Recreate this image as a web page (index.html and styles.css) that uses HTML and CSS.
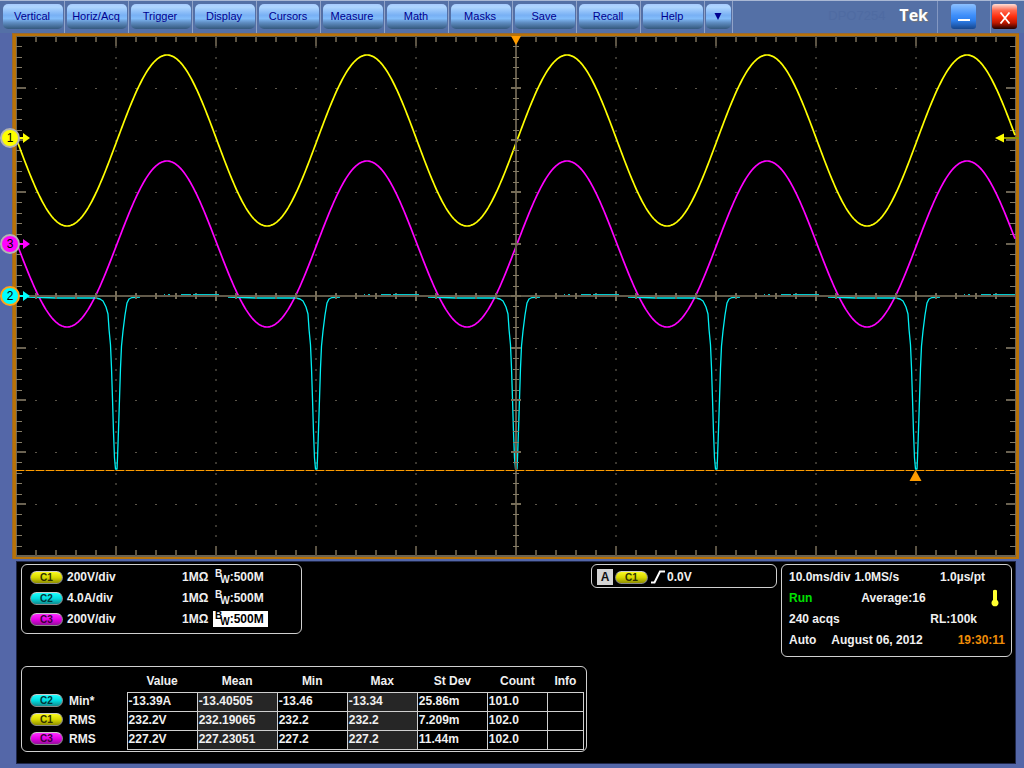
FILE: index.html
```html
<!DOCTYPE html>
<html lang="en">
<head>
<meta charset="utf-8">
<title>Tek Oscilloscope</title>
<link rel="stylesheet" href="styles.css">
</head>
<body>
<header class="toolbar">
  <nav class="menu" aria-label="Main menu">
    <div class="menu-cell"><button class="menu-btn">Vertical</button></div>
    <div class="menu-cell"><button class="menu-btn">Horiz/Acq</button></div>
    <div class="menu-cell"><button class="menu-btn">Trigger</button></div>
    <div class="menu-cell"><button class="menu-btn">Display</button></div>
    <div class="menu-cell"><button class="menu-btn">Cursors</button></div>
    <div class="menu-cell"><button class="menu-btn">Measure</button></div>
    <div class="menu-cell"><button class="menu-btn">Math</button></div>
    <div class="menu-cell"><button class="menu-btn">Masks</button></div>
    <div class="menu-cell"><button class="menu-btn">Save</button></div>
    <div class="menu-cell"><button class="menu-btn">Recall</button></div>
    <div class="menu-cell"><button class="menu-btn">Help</button></div>
    <div class="menu-cell menu-cell-more"><button class="menu-btn" aria-label="More">
      <svg width="8" height="8" viewBox="0 0 8 8"><path d="M0.500 1h7L4 8z" fill="#000090"/></svg>
    </button></div>
  </nav>
  <div class="model">DPO7254</div>
  <div class="brand">Tek</div>
  <div class="window-cell window-cell-min"><button class="win-btn win-min" aria-label="Minimize">
    <svg width="14" height="14" viewBox="0 0 14 14"><path d="M1 9h12v2H1z" fill="#fff"/></svg>
  </button></div>
  <div class="window-cell"><button class="win-btn win-close" aria-label="Close">
    <svg width="12" height="12" viewBox="0 0 12 12"><path d="M1.500 0.500L10.500 11.500M10.500 0.500L1.500 11.500" stroke="#fff" stroke-width="1.800"/></svg>
  </button></div>
</header>

<main>
  <svg class="scope" viewBox="0 33 1024 528" role="img" aria-label="Waveform display">
    <rect x="12" y="33" width="1007" height="526" fill="#b87208"/>
    <path d="M12.500 559V33.500H1019" fill="none" stroke="#9a6a30"/>
    <rect x="16" y="36" width="1000" height="521" fill="#6b6352"/>
    <rect x="17" y="37" width="998" height="518" fill="#000"/>
    <g shape-rendering="crispEdges">
      <path id="dots-x" stroke="#5c564a" fill="none"/>
      <path id="dots-y" stroke="#3a3730" stroke-width="2" fill="none"/>
      <path id="ticks-x" stroke="#5c5444" stroke-width="2" fill="none"/>
      <path id="ticks-y" stroke="#857c66" stroke-width="1" fill="none"/>
      <path id="ticks-major" stroke="#6b6352" stroke-width="2" fill="none"/>
    </g>
    <path id="ch1" class="trace" stroke="#ffff00"/>
    <path id="ch3" class="trace" stroke="#ff00ff"/>
    <path id="ch2" class="trace trace-current" stroke="#00f0f4"/>
    <g shape-rendering="crispEdges" fill="none">
      <path d="M17 296H1015M516 37V556" stroke="#625a4a" stroke-width="2"/>
      <path id="axis-x" stroke="#766d58" stroke-width="2"/>
      <path id="axis-y" stroke="#857c66" stroke-width="1"/>
      <path id="axis-major" stroke="#766d58" stroke-width="2"/>
      <path id="ch2-high" stroke="#00c8d0"/>
      <path d="M16 470.500H1016" stroke="#6a4400"/>
      <path d="M16 470.500H1016" stroke="#ff9c00" stroke-dasharray="8 2"/>
    </g>
    <path d="M511 36h10l-5 9z" fill="#ff9c00"/>
    <path d="M915.500 470l6 11h-12z" fill="#ff9c00"/>
    <path d="M1003 138H1019" stroke="#909000" stroke-width="2"/>
    <path d="M1004 133.500v9l-9-4.500z" fill="#ffff00"/>
    <g class="marker" fill="#ffff00" stroke="#ffff00">
      <path d="M19 138h5" stroke-width="2"/><path d="M23 133v10l7-5z" stroke="none"/>
      <circle cx="10" cy="138" r="9" stroke="#b4b4b4" stroke-width="2"/><text x="10" y="142">1</text>
    </g>
    <g class="marker" fill="#ff00ff" stroke="#ff00ff">
      <path d="M19 244h5" stroke-width="2"/><path d="M23 239v10l7-5z" stroke="none"/>
      <circle cx="10" cy="244" r="9" stroke="#b4b4b4" stroke-width="2"/><text x="10" y="248">3</text>
    </g>
    <g class="marker" fill="#00ffff" stroke="#00ffff">
      <path d="M19 296h5" stroke-width="2"/><path d="M23 291v10l7-5z" stroke="none"/>
      <circle cx="10" cy="296" r="9" stroke="#ffa418" stroke-width="2"/><text x="10" y="300">2</text>
    </g>
  </svg>

  <div class="readouts">
    <div class="left-column">
      <section class="panel channels" aria-label="Channels">
        <div class="channel"><span class="pill pill-c1">C1</span><span>200V/div</span><span>1MΩ</span><span class="bandwidth"><span class="bw-b">B</span><span class="bw-w">W</span>:500M</span></div>
        <div class="channel"><span class="pill pill-c2">C2</span><span>4.0A/div</span><span>1MΩ</span><span class="bandwidth"><span class="bw-b">B</span><span class="bw-w">W</span>:500M</span></div>
        <div class="channel"><span class="pill pill-c3">C3</span><span>200V/div</span><span>1MΩ</span><span class="bandwidth bandwidth-selected"><span class="bw-b">B</span><span class="bw-w">W</span>:500M</span></div>
      </section>
      <section class="panel measurements" aria-label="Measurements">
        <table>
          <colgroup><col class="col-name"><col class="col-std"><col class="col-mean"><col class="col-std"><col class="col-std"><col class="col-std"><col class="col-count"><col class="col-info"></colgroup>
          <thead>
            <tr><td></td><th>Value</th><th>Mean</th><th>Min</th><th>Max</th><th>St Dev</th><th>Count</th><th>Info</th></tr>
          </thead>
          <tbody>
            <tr><th scope="row"><span class="pill pill-c2">C2</span>Min*</th><td>-13.39A</td><td class="shade">-13.40505</td><td>-13.46</td><td class="shade">-13.34</td><td>25.86m</td><td>101.0</td><td></td></tr>
            <tr><th scope="row"><span class="pill pill-c1">C1</span>RMS</th><td>232.2V</td><td class="shade">232.19065</td><td>232.2</td><td class="shade">232.2</td><td>7.209m</td><td>102.0</td><td></td></tr>
            <tr><th scope="row"><span class="pill pill-c3">C3</span>RMS</th><td>227.2V</td><td class="shade">227.23051</td><td>227.2</td><td class="shade">227.2</td><td>11.44m</td><td>102.0</td><td></td></tr>
          </tbody>
        </table>
      </section>
    </div>

    <section class="panel trigger" aria-label="Trigger">
      <span class="trigger-source">A</span>
      <span class="pill pill-c1">C1</span>
      <svg class="slope" width="14" height="14" viewBox="0 0 14 14"><path d="M0 12.500h3.500L9 1.500h5" fill="none" stroke="#fff" stroke-width="2"/></svg>
      <span>0.0V</span>
    </section>

    <section class="panel timebase" aria-label="Timebase">
      <div class="time-row row-rate"><span>10.0ms/div</span><span>1.0MS/s</span><span class="push">1.0µs/pt</span></div>
      <div class="time-row row-state"><span class="run">Run</span><span>Average:16</span>
        <svg class="push" width="8" height="18" viewBox="0 0 8 18"><path d="M2 1.500Q4 0 6 1.500V11A3.500 3.500 0 1 1 2 11z" fill="#ffff30"/></svg></div>
      <div class="time-row row-length"><span>240 acqs</span><span class="push">RL:100k</span></div>
      <div class="time-row row-clock"><span>Auto</span><span>August 06, 2012</span><span class="clock push">19:30:11</span></div>
    </section>
  </div>
</main>
<script src="plot.js"></script>
</body>
</html>
```

FILE: styles.css
```css
* {
  box-sizing: border-box;
}

body {
  margin: 0;
  min-height: 100vh;
  background: #5467a8;
  color: #f0f0f0;
  font: bold 12px/16px "Liberation Sans", Arial, sans-serif;
}

button {
  padding: 0;
  border: 0;
  font: inherit;
  cursor: pointer;
}

.toolbar {
  display: flex;
  align-items: stretch;
  height: 33px;
  border-top: 1px solid #aab8d4;
  background: #5470a6;
}

.menu {
  display: flex;
}

.menu-cell {
  width: 64px;
  padding: 3px 1px 4px 2px;
  border-right: 1px solid #91a3c8;
}

.menu-cell:first-child {
  width: 65px;
  padding-left: 3px;
}

.menu-cell-more {
  width: 28px;
  padding-left: 1px;
}

.menu-btn {
  display: flex;
  align-items: center;
  justify-content: center;
  width: 100%;
  height: 25px;
  padding: 0 2px 2px 0;
  border-radius: 5px;
  background: linear-gradient(#a8ccff 0%, #b0d6ff 12%, #78b0f4 45%, #82bcfa 58%, #5e8cc0 75%, #34587c 100%);
  color: #000090;
  font-size: 11px;
  font-weight: normal;
}

.model {
  margin-left: auto;
  color: #4f6ba2;
  font-size: 13px;
  font-weight: normal;
  line-height: 30px;
}

.brand {
  margin: 0 9px 0 14px;
  color: #fff;
  font-family: "Open Sans", sans-serif;
  font-size: 16px;
  line-height: 28px;
  text-shadow: 1px 1px 1px #777;
}

.window-cell {
  padding: 3px 7px 0 1px;
  border-left: 1px solid #8498c2;
}

.window-cell-min {
  padding: 3px 14px 0 13px;
}

.win-btn {
  display: flex;
  align-items: center;
  justify-content: center;
  width: 25px;
  height: 25px;
  border-radius: 3px;
}

.win-min {
  background: linear-gradient(#8cc0ff 0%, #3f8ffa 45%, #2f80ee 65%, #17468c 100%);
}

.win-close {
  padding-top: 2px;
  background: linear-gradient(#ffe0d8 0%, #ff6a50 25%, #ff3010 50%, #c01800 75%, #200000 100%);
}

.scope {
  display: block;
  width: 100%;
}

.trace {
  fill: none;
  stroke-width: 1.7;
  stroke-linejoin: round;
}

.trace-current {
  stroke-width: 1.3;
}

.marker text {
  fill: #000;
  stroke: none;
  font-size: 12px;
  font-weight: normal;
  text-anchor: middle;
}

.readouts {
  display: grid;
  grid-template-columns: 566fr 186fr 231fr;
  gap: 4px;
  align-items: start;
  margin: 0 8px 4px 16px;
  padding: 2px 3px 11px 4px;
  border: 1px solid #20284a;
  background: #000;
}

.panel {
  border: 1px solid #d0d0d0;
  border-radius: 6px;
}

.left-column {
  display: flex;
  flex-direction: column;
  gap: 32px;
}

.channels {
  width: 281px;
  padding: 1px 0 4px 8px;
}

.channel {
  display: grid;
  grid-template-columns: 32px 110px 26px auto;
  column-gap: 5px;
  align-items: center;
  justify-content: start;
  height: 21px;
}

.pill {
  display: inline-block;
  width: 33px;
  height: 13px;
  border: 1px solid #888;
  border-top-color: #ccc;
  border-radius: 7px;
  font-size: 10px;
  line-height: 12px;
  text-align: center;
}

.channel .pill {
  margin-top: 2px;
}

.pill-c1 {
  background: linear-gradient(#fbfb20, #d8d800 50%, #909000);
  color: #303000;
}

.pill-c2 {
  background: linear-gradient(#20ffff, #00dce0 50%, #108c90);
  color: #003438;
}

.pill-c3 {
  background: linear-gradient(#ff30ff, #e600e6 50%, #96109c);
  color: #380038;
}

.bandwidth {
  display: flex;
  height: 16px;
  padding: 0 4px 0 2px;
}

.bandwidth-selected {
  background: #fff;
  color: #000;
}

.bw-b,
.bw-w {
  font-size: 10px;
}

.bw-b {
  line-height: 10px;
}

.bw-w {
  margin-left: -2px;
  line-height: 22px;
}

.measurements {
  padding: 6px 2px 1px 0;
}

table {
  width: 100%;
  border-collapse: collapse;
  table-layout: fixed;
}

.col-name {
  width: 105px;
}

.col-std {
  width: 70px;
}

.col-mean {
  width: 80px;
}

.col-count {
  width: 60px;
}

.col-info {
  width: 36px;
}

thead th,
thead td {
  height: 19px;
  padding: 0 0 2px;
}

tbody th {
  height: 19px;
  padding: 0 0 2px 8px;
  text-align: left;
}

tbody th .pill {
  margin-right: 6px;
  vertical-align: 1px;
}

tbody td {
  height: 19px;
  padding: 0 0 2px 1px;
  border: 1px solid #d0d0d0;
}

.shade {
  background: #262626;
}

.trigger {
  display: flex;
  align-items: center;
  height: 24px;
  padding: 2px 5px 0 5px;
}

.trigger-source {
  width: 16px;
  margin-right: 2px;
  background: #d4d4d4;
  color: #101010;
  text-align: center;
}

.slope {
  margin: 0 2px 0 3px;
}

.timebase {
  padding: 1px 6px 6px 7px;
}

.time-row {
  display: flex;
  align-items: center;
  height: 21px;
}

.push {
  margin-left: auto;
}

.row-rate {
  gap: 4px;
  padding-right: 20px;
}

.row-state {
  gap: 49px;
  padding-right: 6px;
}

.row-length {
  padding-right: 28px;
}

.row-clock {
  gap: 15px;
}

.run {
  color: #00e000;
}

.clock {
  color: #ee8c08;
}
```

FILE: plot.js
```js
const LEFT = 16, TOP = 36, CENTER_X = 516, CENTER_Y = 296, RIGHT = 1016, BOTTOM = 556;
const DIV_X = 100, DIV_Y = 52;

function draw(id, d) {
  document.getElementById(id).setAttribute('d', d);
}

// Graticule dots, edge ticks and axis ticks
let dotsX = '', dotsY = '', ticksX = '', ticksY = '', major = '';
let axisX = '', axisY = '', axisMajor = '';

for (let i = 1; i < 50; i++) {
  const x = LEFT + i * DIV_X / 5;
  const isMajor = i % 5 === 0;
  const len = isMajor ? 10 : 6;
  ticksX += `M${x} ${TOP}v${len}M${x} ${BOTTOM}v${-len}`;
  if (isMajor) axisMajor += `M${x} ${CENTER_Y - 5}v10`;
  else axisX += `M${x} ${CENTER_Y - 3}v6`;
  for (let j = 1; j < 10; j++) {
    dotsX += `M${x - 1} ${TOP + j * DIV_Y + 0.5}h2`;
  }
}

for (let i = 1; i < 50; i++) {
  const y = Math.round(TOP + i * DIV_Y / 5);
  const isMajor = i % 5 === 0;
  if (isMajor) {
    major += `M${LEFT} ${y}h10M${RIGHT} ${y}h-10`;
    axisMajor += `M${CENTER_X - 5} ${y}h10`;
  } else {
    ticksY += `M${LEFT} ${y + 0.5}h6M${RIGHT} ${y + 0.5}h-6`;
    axisY += `M${CENTER_X - 3} ${y + 0.5}h6`;
  }
  for (let k = 1; k < 10; k++) {
    dotsY += `M${LEFT + k * DIV_X} ${y}v2`;
  }
}

draw('dots-x', dotsX);
draw('dots-y', dotsY);
draw('ticks-x', ticksX);
draw('ticks-y', ticksY);
draw('ticks-major', major);
draw('axis-x', axisX);
draw('axis-y', axisY);
draw('axis-major', axisMajor);

// Voltage traces
function sine(mid, amplitude, start) {
  let d = '';
  for (let x = start; x <= 1015; x++) {
    const y = mid - amplitude * Math.sin((x - 117) * Math.PI / 100);
    d += (d ? 'L' : 'M') + x + ' ' + y.toFixed(1);
  }
  return d;
}

draw('ch1', sine(140.5, 85.5, 18));
draw('ch3', sine(244, 83, 18));

// Current pulses, as offsets from the centre of each pulse
const pulse = [
  [-88, 297], [-60, 298], [-20, 298], [-16, 299], [-13, 301], [-10, 307], [-8, 314],
  [-7, 329], [-5.5, 345], [-4.5, 368], [-3.5, 399], [-2.5, 432], [-1.5, 458], [-0.5, 469],
  [1, 469], [1.5, 458], [2.5, 430], [3.5, 399], [4.5, 368], [5.5, 346], [7, 331],
  [9, 315], [11, 303], [13, 299], [16, 297.5], [24, 297]
];
let current = '', high = '';
for (let center = 116; center <= 916; center += 200) {
  pulse.forEach(([dx, y], i) => {
    current += `${i ? 'L' : 'M'}${center + dx} ${y}`;
  });
  high += `M${center + 48} 294.500h1M${center + 52} 294.500h2M${center + 65} 294.500h10`;
  high += `M${center + 77} 294.500h${center === 916 ? 22 : 26}`;
}
draw('ch2', current);
draw('ch2-high', high);
```
